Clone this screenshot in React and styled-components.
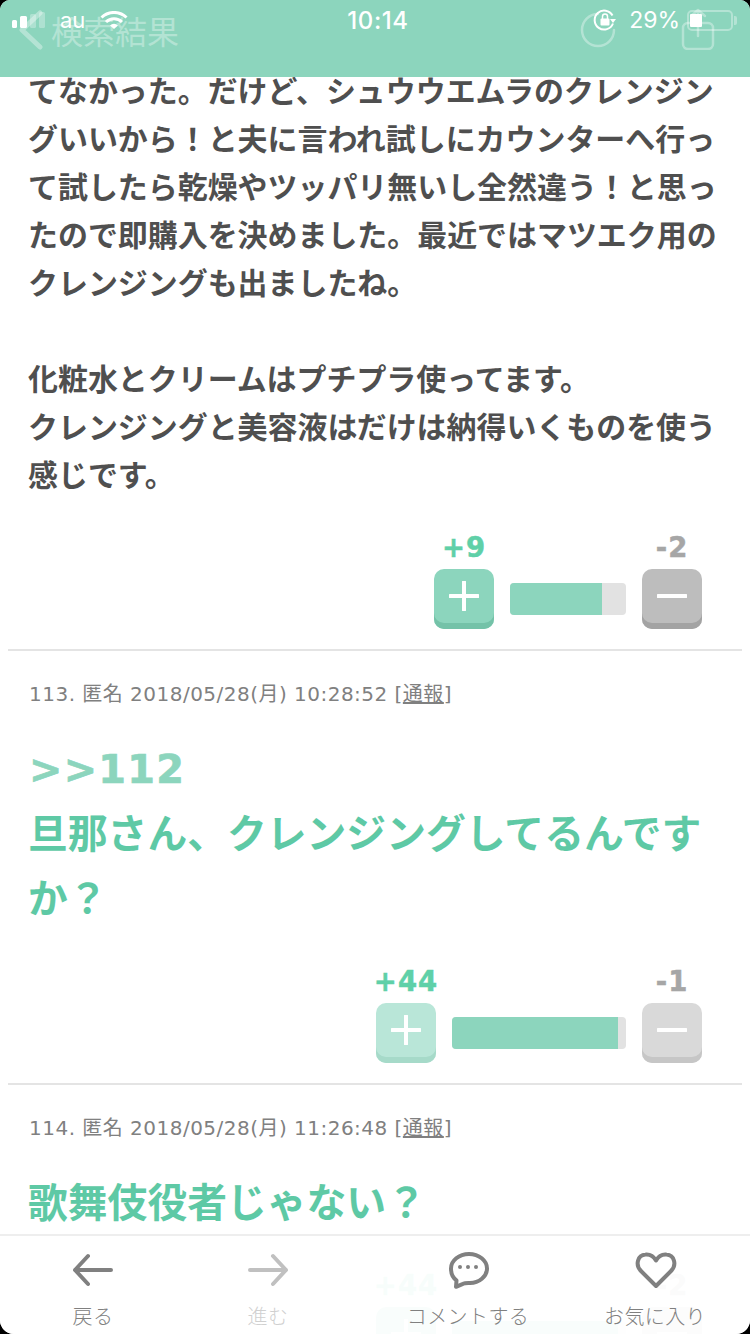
import styled, { createGlobalStyle } from "styled-components";

const GlobalStyle = createGlobalStyle`
  html, body {
    margin: 0;
    padding: 0;
    background: #000;
  }
`;

const FONT = `"DejaVu Sans", "Noto Sans CJK JP", sans-serif`;
const UI_FONT = `Inter, "Noto Sans CJK JP", sans-serif`;

const Screen = styled.div`
  position: relative;
  width: 750px;
  height: 1334px;
  overflow: hidden;
  background: #fff;
  border-radius: 10px 10px 14px 14px;
  font-family: ${FONT};
`;

const Header = styled.header`
  position: absolute;
  top: 0;
  left: 0;
  right: 0;
  height: 77px;
  background: #8cd5bd;
  z-index: 2;
`;

const NavLayer = styled.div`
  display: flex;
  align-items: center;
  height: 60px;
  padding: 0 35px 0 18px;
  color: rgba(255, 255, 255, 0.35);
`;

const NavTitle = styled.div`
  margin-left: 7px;
  margin-top: -1px;
  font-family: "Noto Sans CJK JP", sans-serif;
  font-size: 32px;
`;

const NavActions = styled.div`
  display: flex;
  align-items: flex-start;
  gap: 65px;
  margin-left: auto;
  align-self: flex-start;
  margin-top: 8px;
`;

const ReloadIcon = styled.svg`
  margin-top: 4px;
`;

const StatusBar = styled.div`
  position: absolute;
  top: 0;
  left: 0;
  right: 0;
  height: 40px;
  display: grid;
  grid-template-columns: 1fr auto 1fr;
  align-items: center;
  padding: 0 12px;
  color: #fff;
  font-family: ${UI_FONT};
`;

const StatusLeft = styled.div`
  display: flex;
  align-items: center;
  gap: 14px;
  font-size: 22px;
`;

const StatusRight = styled.div`
  display: flex;
  align-items: center;
  justify-content: flex-end;
  gap: 12px;
  font-size: 23px;
`;

const Carrier = styled.span`
  margin-right: 1px;
`;

const Percent = styled.span`
  margin-right: -5px;
`;

const Clock = styled.div`
  margin-left: 6px;
  font-size: 24px;
  font-weight: 500;
  letter-spacing: 0.6px;
`;

const Battery = styled.div`
  position: relative;
  width: 46px;
  height: 21px;
  margin-right: 5px;
  box-sizing: border-box;
  border: 2px solid rgba(255, 255, 255, 0.35);
  border-radius: 5px;

  &::before {
    content: "";
    position: absolute;
    top: 2px;
    left: 1px;
    bottom: 2px;
    width: 12px;
    background: #fff;
    border-radius: 1px;
  }

  &::after {
    content: "";
    position: absolute;
    top: 4px;
    right: -6px;
    width: 3px;
    height: 9px;
    background: rgba(255, 255, 255, 0.35);
    border-radius: 0 2px 2px 0;
  }
`;

const Main = styled.main`
  padding-top: 68px;
`;

const Comment = styled.article`
  &:not(:first-child) {
    padding-top: 32px;
  }
`;

const Meta = styled.div`
  padding: 0 29px;
  height: 24px;
  line-height: 22px;
  font-size: 20px;
  letter-spacing: 0.48px;
  color: #808080;
  white-space: nowrap;

  u {
    color: #808080;
  }
`;

const Body = styled.div`
  margin-left: 28px;
  width: 694px;
  font-weight: 700;
  font-size: ${(p) => (p.$big ? "39.8px" : "29.95px")};
  line-height: ${(p) => (p.$big ? "65px" : "48px")};
  color: ${(p) => (p.$big ? "#5ec9a5" : "#4f4f4f")};
  padding-top: ${(p) => (p.$big ? "30px" : "0")};
`;

const Anchor = styled.div`
  margin-left: 1px;
  color: #8cd5bd;
  letter-spacing: 1.3px;
  -webkit-text-stroke: 0.7px #8cd5bd;
`;

const Votes = styled.div`
  display: flex;
  justify-content: flex-end;
  align-items: flex-end;
  gap: 16px;
  padding: 0 48px 20px 0;
  margin-top: ${(p) => (p.$big ? "32px" : "30px")};
`;

const VoteGroup = styled.div`
  display: flex;
  flex-direction: column;
  align-items: center;
  gap: 3px;
  width: 60px;
`;

const Score = styled.div`
  height: 36px;
  line-height: 34px;
  font-size: 27.5px;
  font-weight: 700;
  letter-spacing: 1px;
  white-space: nowrap;
  color: ${(p) => (p.$minus ? "#a6a6a6" : "#5fd0a8")};
  -webkit-text-stroke: 0.5px ${(p) => (p.$minus ? "#a6a6a6" : "#5fd0a8")};
`;

const VoteButton = styled.div`
  width: 60px;
  height: 60px;
  box-sizing: border-box;
  display: flex;
  align-items: center;
  justify-content: center;
  padding-bottom: 6px;
  border-radius: 10px;
  background: ${(p) => p.$face};
  box-shadow: inset 0 -6px 0 ${(p) => p.$edge};
`;

const Bar = styled.div`
  width: ${(p) => p.$width}px;
  height: 32px;
  margin-bottom: 14px;
  border-radius: 4px;
  overflow: hidden;
  background: #e2e2e2;
`;

const BarFill = styled.div`
  height: 100%;
  background: #8cd5bd;
`;

const Divider = styled.hr`
  margin: 0 8px;
  height: 2px;
  border: 0;
  background: #e4e4e4;
`;

const Footer = styled.footer`
  position: absolute;
  left: 0;
  right: 0;
  bottom: 0;
  height: 100px;
  box-sizing: border-box;
  display: grid;
  grid-template-columns: 186px 164px 236px 138px;
  background: rgba(255, 255, 255, 0.95);
  border-top: 2px solid #eeeeee;
  z-index: 2;
`;

const Tab = styled.div`
  display: flex;
  flex-direction: column;
  align-items: center;
  padding-top: 14px;
  color: ${(p) => (p.$disabled ? "#d0d0d0" : "#808080")};
`;

const TabIcon = styled.svg`
  width: 44px;
  height: 40px;
  stroke: ${(p) => (p.$disabled ? "#c0c0c0" : "#808080")};
  fill: none;
  stroke-width: 4;
  stroke-linecap: round;
  stroke-linejoin: round;
`;

const TabLabel = styled.div`
  margin-top: 12px;
  font-family: "Noto Sans CJK JP", sans-serif;
  font-weight: 300;
  font-size: 20px;
  letter-spacing: 0.4px;
  line-height: 28px;
  white-space: nowrap;
`;

const Plus = () => (
  <svg width="30" height="30" viewBox="0 0 30 30" stroke="#fff" strokeWidth="4" strokeLinecap="round">
    <path d="M15 1v28M1 15h28" />
  </svg>
);

const Minus = () => (
  <svg width="30" height="30" viewBox="0 0 30 30" stroke="#fff" strokeWidth="4" strokeLinecap="round">
    <path d="M1 15h28" />
  </svg>
);

const VoteRow = ({ up, down, width, fill, faded, big }) => (
  <Votes $big={big}>
    <VoteGroup>
      <Score>+{up}</Score>
      <VoteButton $face={faded ? "#b9e6d8" : "#8cd5bd"} $edge={faded ? "#a6dac9" : "#74c2a8"}>
        <Plus />
      </VoteButton>
    </VoteGroup>
    <Bar $width={width}>
      <BarFill style={{ width: `${fill}%` }} />
    </Bar>
    <VoteGroup>
      <Score $minus>-{down}</Score>
      <VoteButton $face={faded ? "#d9d9d9" : "#bdbdbd"} $edge={faded ? "#c6c6c6" : "#a3a3a3"}>
        <Minus />
      </VoteButton>
    </VoteGroup>
  </Votes>
);

const CommentMeta = ({ no, date }) => (
  <Meta>
    {no}. 匿名 {date} [<u>通報</u>]
  </Meta>
);

const App = () => (
  <Screen>
    <GlobalStyle />
    <Header>
      <NavLayer>
        <svg width="26" height="40" viewBox="0 0 26 40" fill="none" stroke="currentColor" strokeWidth="5" strokeLinecap="round" strokeLinejoin="round">
          <path d="M22 3 4 20l18 17" />
        </svg>
        <NavTitle>検索結果</NavTitle>
        <NavActions>
          <ReloadIcon width="36" height="36" viewBox="0 0 36 36" fill="none" stroke="currentColor" strokeWidth="2.5" strokeLinecap="round">
            <path d="M34 18A16 16 0 1 1 18 2" />
          </ReloadIcon>
          <svg width="34" height="42" viewBox="0 0 34 42" fill="none" stroke="currentColor" strokeWidth="2.5" strokeLinecap="round" strokeLinejoin="round">
            <rect x="2" y="15" width="30" height="26" rx="5" />
            <path d="M17 28V2M10 8l7-6 7 6" />
          </svg>
        </NavActions>
      </NavLayer>
      <StatusBar>
        <StatusLeft>
          <svg width="34" height="16" viewBox="0 0 34 16">
            <rect x="0" y="8" width="5" height="8" rx="1.5" fill="#fff" />
            <rect x="8" y="4" width="7" height="12" rx="1.5" fill="#fff" />
            <rect x="18" y="2" width="6" height="14" rx="1.5" fill="#fff" fillOpacity="0.3" />
            <rect x="27" y="0" width="6" height="16" rx="1.5" fill="#fff" fillOpacity="0.3" />
          </svg>
          <Carrier>au</Carrier>
          <svg width="28" height="18" viewBox="0 0 28 18" fill="none" stroke="#fff" strokeWidth="3">
            <path d="M1.5 6.5a18 18 0 0 1 25 0M6 11a11.500 11.500 0 0 1 16 0" />
            <path d="M10 14.500a5.500 5.500 0 0 1 8 0L14 18z" fill="#fff" stroke="none" />
          </svg>
        </StatusLeft>
        <Clock>10:14</Clock>
        <StatusRight>
          <svg width="24" height="24" viewBox="0 0 24 24" fill="none" stroke="#fff" strokeWidth="2">
            <path d="M20 15.500A9.500 9.500 0 1 1 19.500 7.500" />
            <path d="M17 11h6l-3 4z" fill="#fff" stroke="none" />
            <rect x="7.500" y="10.500" width="9" height="7" rx="1" fill="#fff" stroke="none" />
            <path d="M9.500 11V8.500a2.500 2.500 0 0 1 5 0V11" strokeWidth="1.500" />
          </svg>
          <Percent>29%</Percent>
          <Battery />
        </StatusRight>
      </StatusBar>
    </Header>

    <Main>
      <Comment>
        <Body>
          てなかった。だけど、シュウウエムラのクレンジングいいから！と夫に言われ試しにカウンターへ行って試したら乾燥やツッパリ無いし全然違う！と思ったので即購入を決めました。最近ではマツエク用のクレンジングも出ましたね。
          <br />
          <br />
          化粧水とクリームはプチプラ使ってます。
          <br />
          クレンジングと美容液はだけは納得いくものを使う感じです。
        </Body>
        <VoteRow up={9} down={2} width={116} fill={79} />
        <Divider />
      </Comment>

      <Comment>
        <CommentMeta no={113} date="2018/05/28(月) 10:28:52" />
        <Body $big>
          <Anchor>&gt;&gt;112</Anchor>
          旦那さん、クレンジングしてるんですか？
        </Body>
        <VoteRow up={44} down={1} width={174} fill={95.4} faded big />
        <Divider />
      </Comment>

      <Comment>
        <CommentMeta no={114} date="2018/05/28(月) 11:26:48" />
        <Body $big>歌舞伎役者じゃない？</Body>
        <VoteRow up={44} down={2} width={174} fill={95.4} big />
      </Comment>
    </Main>

    <Footer>
      <Tab>
        <TabIcon viewBox="0 0 44 40">
          <path d="M40 20H4M17 6 4 20l13 14" />
        </TabIcon>
        <TabLabel>戻る</TabLabel>
      </Tab>
      <Tab $disabled>
        <TabIcon $disabled viewBox="0 0 44 40">
          <path d="M4 20h36M27 6l13 14-13 14" />
        </TabIcon>
        <TabLabel>進む</TabLabel>
      </Tab>
      <Tab>
        <TabIcon viewBox="0 0 44 40">
          <path d="M23 4c10 0 18 6.500 18 14.500S33 33 24 33c-3 0-5-.2-7 .8l-7 3 .5-6.500C7 28 5 24 5 18.500 5 10.500 13 4 23 4z" />
          <circle cx="14" cy="17" r="2" fill="#808080" stroke="none" />
          <circle cx="22" cy="17" r="2" fill="#808080" stroke="none" />
          <circle cx="30" cy="17" r="2" fill="#808080" stroke="none" />
        </TabIcon>
        <TabLabel>コメントする</TabLabel>
      </Tab>
      <Tab>
        <TabIcon viewBox="0 0 44 40">
          <path d="M23 36 8 21C2 15 4.500 5 12.500 4.500 17.500 4 21 7 23 10.500 25 7 28.500 4 33.500 4.500 41.500 5 44 15 38 21z" />
        </TabIcon>
        <TabLabel>お気に入り</TabLabel>
      </Tab>
    </Footer>
  </Screen>
);

export default App;
